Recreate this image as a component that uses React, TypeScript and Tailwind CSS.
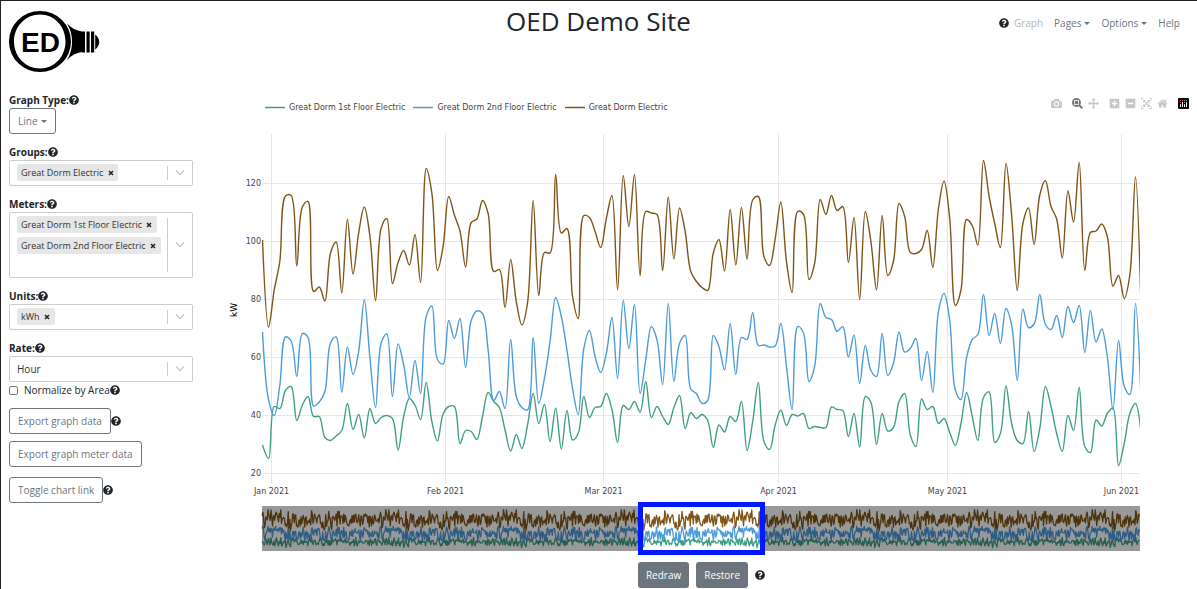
import { ReactNode } from "react";
import { FaQuestionCircle } from "react-icons/fa";
import clsx from "clsx";

// Plot area inside the chart's viewBox
const PLOT = { left: 262, right: 1140, top: 134, bottom: 484 };
const FIRST_DAY_X = 268.6;
const DAY_WIDTH = 5.629;

const yTicks = [
  { label: "120", y: 183 },
  { label: "100", y: 241 },
  { label: "80", y: 299 },
  { label: "60", y: 357 },
  { label: "40", y: 415 },
  { label: "20", y: 473 },
];

const xTicks = [
  { label: "Jan 2021", x: 271.5 },
  { label: "Feb 2021", x: 445.5 },
  { label: "Mar 2021", x: 603.5 },
  { label: "Apr 2021", x: 778.5 },
  { label: "May 2021", x: 947.5 },
  { label: "Jun 2021", x: 1121.5 },
];

interface Trace {
  name: string;
  color: string;
  // one height per day, in plot units
  days: number[];
}

const traces: Trace[] = [
  {
    name: "Great Dorm 1st Floor Electric",
    color: "#3f9f85",
    days: [
      445, 458.5, 406.5, 408.5, 390.5, 386.5, 420.5, 405, 396.5, 416.5, 416.5,
      437.5, 440.5, 436, 430.5, 403.5, 429.5, 414.5, 438, 408.5, 423.5, 417.5,
      415.5, 418.5, 450, 416.5, 398.5, 405, 419.5, 382.5, 421.5, 441, 414,
      406.5, 406.5, 443.5, 430.5, 431.5, 439.5, 416.5, 392.5, 401.5, 407.5,
      430, 451, 434.5, 448.5, 425, 393.5, 423.5, 404.5, 441.5, 408, 449, 410.5,
      440, 433.5, 396.5, 417.5, 407.5, 406.5, 393.5, 409.5, 442.5, 405.5,
      409.5, 401.5, 412, 381.5, 417.5, 406.5, 416.5, 424.5, 407.5, 395.5,
      428.5, 412.5, 418.5, 414.5, 420.5, 447.5, 425, 432, 416.5, 421.5, 401.5,
      450.5, 421.5, 382.5, 441.5, 449.5, 425, 410, 425.5, 414.5, 416, 413.5,
      428.5, 426.5, 427.5, 427.5, 407, 409.5, 410.5, 436.5, 413.5, 447, 396.5,
      402.5, 444.5, 413.5, 431, 427.5, 401.5, 393.5, 435, 446.5, 399, 409.5,
      406.5, 423.5, 418.5, 432.5, 445.5, 423.5, 392.5, 416.5, 440.5, 397.5,
      392, 442.5, 433.5, 386, 423.5, 440.5, 443.5, 411.5, 451.5, 428.5, 386.5,
      406.5, 433.5, 451.5, 415.5, 430.5, 387.5, 446.5, 452.5, 420, 426, 413.5,
      408, 465.5, 443.5, 413.5, 403.5, 433,
    ],
  },
  {
    name: "Great Dorm 2nd Floor Electric",
    color: "#4c9bdb",
    days: [
      332, 400, 415.5, 385, 337, 341, 376.5, 333.5, 337.5, 406, 402, 391.5,
      343, 337, 392, 347, 374.5, 351.5, 300, 358, 407.5, 343, 334, 396.5, 344,
      365, 397.5, 360.5, 393.5, 316.5, 306, 359.5, 364, 320.5, 338.5, 318.5,
      367.5, 320.5, 311, 313.5, 350, 400.5, 391.5, 408.5, 339.5, 396.5, 407.5,
      410, 337.5, 403.5, 378.5, 341.5, 297.5, 316.5, 350, 388.5, 414.5, 348.5,
      330.5, 356.5, 372.5, 353.5, 317.5, 378.5, 300.5, 348.5, 304.5, 393.5,
      360, 326.5, 340, 384.5, 303.5, 381.5, 343.5, 335.5, 389, 393.5, 403.5,
      400.5, 335.5, 346.5, 370, 323.5, 374.5, 337.5, 339.5, 312.5, 345.5, 345,
      347, 346, 323.5, 366.5, 409.5, 326.5, 332.5, 381.5, 366.5, 303.5, 317.5,
      319.5, 331.5, 326.5, 357, 335, 383.5, 345.5, 370.5, 376.5, 333.5, 375.5,
      363.5, 332, 352, 348.5, 338.5, 380.5, 351.5, 392.5, 311.5, 293.5, 320,
      390, 399.5, 357.5, 339.5, 334.5, 294.5, 335.5, 313.5, 343.5, 308.5, 325,
      380.5, 309, 327.5, 324, 294.5, 324.5, 329.5, 315.5, 337.5, 306.5, 322.5,
      305.5, 352.5, 310.5, 342, 329, 356.5, 409.5, 340.5, 386, 394.5, 303.5,
      400,
    ],
  },
  {
    name: "Great Dorm Electric",
    color: "#7f5417",
    days: [
      240, 327, 290, 261, 196, 195.5, 266, 207, 201.5, 291.5, 287, 301, 253,
      242, 293, 219.5, 274, 233, 207, 236, 300.5, 228, 218.5, 283.5, 262.5,
      250.5, 265, 234.5, 282.5, 168.5, 193, 270.5, 246.5, 196.5, 215, 231, 267,
      222.5, 219, 200.5, 213.5, 271.5, 269.5, 307.5, 259.5, 301.5, 325, 303,
      200.5, 295.5, 252.5, 253, 174.5, 233, 228.5, 296.5, 318.5, 215.5, 217.5,
      231.5, 247.5, 218.5, 195.5, 290, 175.5, 226.5, 174.5, 275.5, 211.5, 213,
      214.5, 270.5, 197, 259, 208, 231.5, 271.5, 281.5, 287.5, 290.5, 253,
      239.5, 271, 209.5, 265, 207.5, 259, 200, 196.5, 256.5, 265.5, 238.5, 202,
      261.5, 292.5, 211.5, 214, 279.5, 263.5, 199.5, 214.5, 195.5, 210.5,
      206.5, 262.5, 217.5, 299.5, 211.5, 241.5, 290, 215.5, 275.5, 261.5,
      203.5, 216.5, 252.5, 253.5, 249.5, 230.5, 267.5, 208.5, 181, 218.5,
      305.5, 290, 219.5, 225.5, 245, 160.5, 196.5, 223.5, 247.5, 163.5, 215,
      290.5, 223.5, 208, 244.5, 195, 180.5, 206.5, 219, 258, 191, 222, 162.5,
      270.5, 232.5, 231, 224, 236.5, 286, 275.5, 298.5, 275, 177, 310,
    ],
  },
];

type Point = [number, number];

// Centripetal Catmull-Rom control points around b
function tangents(a: Point, b: Point, c: Point): [Point, Point] {
  const ax = a[0] - b[0];
  const ay = a[1] - b[1];
  const cx = c[0] - b[0];
  const cy = c[1] - b[1];
  const da = Math.pow(ax * ax + ay * ay, 0.25);
  const dc = Math.pow(cx * cx + cy * cy, 0.25);
  const nx = dc * dc * ax - da * da * cx;
  const ny = dc * dc * ay - da * da * cy;
  const d1 = 3 * dc * (da + dc);
  const d2 = 3 * da * (da + dc);
  return [
    [b[0] + nx / d1, b[1] + ny / d1],
    [b[0] - nx / d2, b[1] - ny / d2],
  ];
}

const fmt = (p: Point) => `${p[0].toFixed(2)},${p[1].toFixed(2)}`;

function splinePath(days: number[]) {
  const pts: Point[] = days.map((y, i) => [
    i === 0 ? PLOT.left + 0.5 : FIRST_DAY_X + (i - 1) * DAY_WIDTH,
    y,
  ]);
  const t = pts.slice(1, -1).map((p, i) => tangents(pts[i], p, pts[i + 2]));
  let d = `M${fmt(pts[0])}Q${fmt(t[0][0])} ${fmt(pts[1])}`;
  for (let i = 2; i < pts.length - 1; i++) {
    d += `C${fmt(t[i - 2][1])} ${fmt(t[i - 1][0])} ${fmt(pts[i])}`;
  }
  return d + `Q${fmt(t[t.length - 1][1])} ${fmt(pts[pts.length - 1])}`;
}

// The range slider shows several repeats of the season around the window
const SLIDER = { from: 643, day: 0.75 };

function sliderPath(days: number[]) {
  const n = days.length;
  const first = Math.ceil((PLOT.left - SLIDER.from) / SLIDER.day);
  const last = Math.floor((PLOT.right - SLIDER.from) / SLIDER.day);
  const pts: string[] = [];
  for (let k = first; k <= last; k++) {
    const y = 489.5 + days[((k % n) + n) % n] * 0.125;
    pts.push(fmt([SLIDER.from + k * SLIDER.day, y]));
  }
  return "M" + pts.join("L");
}

function Help() {
  return (
    <button
      type="button"
      aria-label="Help"
      className="shrink-0 text-[#212529]"
    >
      <FaQuestionCircle className="size-[10px]" />
    </button>
  );
}

function Caret() {
  return (
    <svg viewBox="0 0 6 3" className="ml-[3px] h-[3px] w-[6px] fill-current">
      <path d="M0 0h6L3 3z" />
    </svg>
  );
}

function Logo() {
  return (
    <svg viewBox="0 0 91 62" className="h-[62px] w-[91px]">
      <path
        fillRule="evenodd"
        d="M31 0a31 30.5 0 1 0 0 61a31 30.5 0 1 0 0-61zM31 3.5c14.500 0 25.500 12 25.500 27s-11 27-25.500 27S5 45.500 5 30.500s11.500-27 26-27z"
      />
      <path d="M58 12.500c4 4.500 9.500 7.300 15 8v20.500c-5.500.7-11 3.500-15 8c6.800-11 6.800-25.500 0-36.500z" />
      <path d="M73 20.500h3v21h-3zM77.500 20.500h3.200v21h-3.200zM82 20.500h3.200v21h-3.200z" />
      <path d="M86.200 23.500c2.300 1.500 4 4.500 4 7.500s-1.700 6-4 7.500z" />
      <text
        x="12"
        y="40.500"
        fontSize="28"
        fontWeight="700"
        fontFamily="Liberation Sans, sans-serif"
      >
        ED
      </text>
    </svg>
  );
}

function Chevron() {
  return (
    <span className="flex w-6 shrink-0 items-center justify-center self-stretch">
      <svg viewBox="0 0 10 6" className="h-[6px] w-[10px]">
        <path
          d="M1.500 1l3.500 3.500L8.500 1"
          fill="none"
          stroke="#ccc"
          strokeWidth="1.700"
          strokeLinecap="round"
          strokeLinejoin="round"
        />
      </svg>
    </span>
  );
}

function FieldLabel({ id, children }: { id: string; children: ReactNode }) {
  return (
    <div className="flex h-4 items-center">
      <label
        htmlFor={id}
        className="text-[10px] leading-4 font-bold text-[#212529]"
      >
        {children}
      </label>
      <Help />
    </div>
  );
}

interface MultiSelectProps {
  id: string;
  label: string;
  values: string[];
  tall?: boolean;
}

function MultiSelect({ id, label, values, tall }: MultiSelectProps) {
  return (
    <div className="mt-2.5">
      <FieldLabel id={id}>{label}</FieldLabel>
      <div
        className={clsx(
          "flex rounded-xs border border-[#ccc]",
          tall ? "h-[66px]" : "h-[26px]",
        )}
      >
        <div className="flex min-w-0 flex-1 flex-wrap content-start gap-x-1 gap-y-[4px] pt-[3px] pl-[7px]">
          {values.map((value) => (
            <span
              key={value}
              className="flex h-[17px] items-center rounded-xs bg-[#e6e6e6] pl-1 text-[9px] text-[#333]"
            >
              {value}
              <button
                type="button"
                aria-label={`Remove ${value}`}
                className="flex h-full w-[15px] items-center justify-center"
              >
                <svg viewBox="0 0 6 6" className="size-[6px]">
                  <path d="M1 1l4 4M5 1L1 5" stroke="#222" strokeWidth="1.500" />
                </svg>
              </button>
            </span>
          ))}
          <input id={id} className="h-[17px] w-1 outline-none" />
        </div>
        <span className="my-[5px] w-px bg-[#ccc]" />
        <Chevron />
      </div>
    </div>
  );
}

interface OutlineButtonProps {
  id?: string;
  children: ReactNode;
}

function OutlineButton({ id, children }: OutlineButtonProps) {
  return (
    <button
      id={id}
      type="button"
      className="flex h-[26px] items-center rounded-[3px] border border-[#6c757d] px-2 text-[10px] text-[#6c757d]"
    >
      {children}
    </button>
  );
}

function Sidebar() {
  return (
    <aside className="w-[221px] shrink-0 pr-[29px] pl-2">
      <FieldLabel id="graph-type">Graph Type:</FieldLabel>
      <OutlineButton id="graph-type">
        Line
        <Caret />
      </OutlineButton>
      <MultiSelect id="groups" label="Groups:" values={["Great Dorm Electric"]} />
      <MultiSelect
        id="meters"
        label="Meters:"
        values={[
          "Great Dorm 1st Floor Electric",
          "Great Dorm 2nd Floor Electric",
        ]}
        tall
      />
      <MultiSelect id="units" label="Units:" values={["kWh"]} />
      <div className="mt-2.5">
        <FieldLabel id="rate">Rate:</FieldLabel>
        <div className="flex h-[26px] rounded-xs border border-[#ccc]">
          <select
            id="rate"
            className="min-w-0 flex-1 appearance-none bg-transparent pl-[7px] text-[10px] text-[#333]"
          >
            <option>Hour</option>
          </select>
          <span className="my-[5px] w-px bg-[#ccc]" />
          <Chevron />
        </div>
      </div>
      <div className="flex h-4 items-center">
        <input
          id="area"
          type="checkbox"
          className="mr-1.5 size-[9px] appearance-none rounded-[2px] border border-[#767676]"
        />
        <label htmlFor="area" className="text-[10px] leading-4 text-[#212529]">
          Normalize by Area
        </label>
        <Help />
      </div>
      <div className="mt-2.5 flex items-center">
        <OutlineButton>Export graph data</OutlineButton>
        <Help />
      </div>
      <div className="mt-[7px] flex">
        <OutlineButton>Export graph meter data</OutlineButton>
      </div>
      <div className="mt-2.5 flex items-center">
        <OutlineButton>Toggle chart link</OutlineButton>
        <Help />
      </div>
    </aside>
  );
}

interface ModeIcon {
  title: string;
  width: number;
  path: string;
  className: string;
}

const modeIcons: ModeIcon[] = [
  {
    title: "Download plot as a png",
    width: 1000,
    path: "m500 450c-83 0-150-67-150-150 0-83 67-150 150-150 83 0 150 67 150 150 0 83-67 150-150 150z m400 150h-120c-16 0-34 13-39 29l-31 93c-6 15-23 28-40 28h-340c-16 0-34-13-39-28l-31-94c-6-15-23-28-40-28h-120c-55 0-100-45-100-100v-450c0-55 45-100 100-100h800c55 0 100 45 100 100v450c0 55-45 100-100 100z m-400-550c-138 0-250 112-250 250 0 138 112 250 250 250 138 0 250-112 250-250 0-138-112-250-250-250z m365 380c-19 0-35 16-35 35 0 19 16 35 35 35 19 0 35-16 35-35 0-19-16-35-35-35z",
    className: "mr-2.5 fill-[#c6c6c6]",
  },
  {
    title: "Zoom",
    width: 1000,
    path: "m1000-25l-250 251c40 63 63 138 63 218 0 224-182 406-407 406-224 0-406-182-406-406s183-406 407-406c80 0 155 22 218 62l250-250 125 125z m-812 250l0 438 437 0 0-438-437 0z m62 375l313 0 0-312-313 0 0 312z",
    className: "mr-[5px] fill-[#777]",
  },
  {
    title: "Pan",
    width: 1000,
    path: "m1000 350l-187 188 0-125-250 0 0 250 125 0-188 187-187-187 125 0 0-250-250 0 0 125-188-188 186-187 0 125 252 0 0-250-125 0 187-188 188 188-125 0 0 250 250 0 0-126 187 188z",
    className: "mr-2.5 fill-[#c6c6c6]",
  },
  {
    title: "Zoom in",
    width: 875,
    path: "m1 787l0-875 875 0 0 875-875 0z m687-500l-187 0 0-187-125 0 0 187-188 0 0 125 188 0 0 187 125 0 0-187 187 0 0-125z",
    className: "mr-[5px] fill-[#c6c6c6]",
  },
  {
    title: "Zoom out",
    width: 875,
    path: "m0 788l0-876 875 0 0 876-875 0z m688-500l-500 0 0 125 500 0 0-125z",
    className: "mr-[5px] fill-[#c6c6c6]",
  },
  {
    title: "Autoscale",
    width: 1000,
    path: "m250 850l-187 0-63 0 0-62 0-188 63 0 0 188 187 0 0 62z m688 0l-188 0 0-62 188 0 0-188 62 0 0 188 0 62-62 0z m-875-938l0 188-63 0 0-188 0-62 63 0 187 0 0 62-187 0z m875 188l0-188-188 0 0-62 188 0 62 0 0 62 0 188-62 0z m-125 188l-1 0-93-94-156 156 156 156 92-93 2 0 0 250-250 0 0-2 93-92-156-156-156 156 94 92 0 2-250 0 0-250 0 0 93 93 157-156-157-156-93 94 0 0 0-250 250 0 0 0-94 93 156 157 156-157-93-93 0 0 250 0 0 250z",
    className: "mr-[5px] fill-[#c6c6c6]",
  },
  {
    title: "Reset axes",
    width: 928,
    path: "m786 296v-267q0-15-11-26t-25-10h-214v214h-143v-214h-214q-15 0-25 10t-11 26v267q0 1 0 2t0 2l321 264 321-264q1-1 1-4z m124 39l-34-41q-5-5-12-6h-2q-7 0-12 3l-386 322-386-322q-7-4-13-4-7 2-12 7l-35 41q-4 5-3 13t6 12l401 334q18 15 42 15t43-15l136-114v109q0 8 5 13t13 5h107q8 0 13-5t5-13v-227l122-102q5-5 6-12t-4-13z",
    className: "mr-2.5 fill-[#c6c6c6]",
  },
];

function ModeBar() {
  return (
    <div className="flex h-[22px] items-center">
      {modeIcons.map((icon) => (
        <button
          key={icon.title}
          type="button"
          aria-label={icon.title}
          className={icon.className}
        >
          <svg viewBox={`0 0 ${icon.width} 1000`} className="size-[11px]">
            <path transform="matrix(1 0 0 -1 0 850)" d={icon.path} />
          </svg>
        </button>
      ))}
      <a href="#plotly" aria-label="Produced with Plotly">
        <svg viewBox="0 0 132 132" className="size-[11px]">
          <rect width="132" height="132" rx="12" />
          <g fill="#ef5a78">
            <circle cx="30" cy="30" r="7" />
            <circle cx="54" cy="30" r="7" />
            <circle cx="30" cy="54" r="7" />
          </g>
          <g fill="#80cfbe">
            <circle cx="78" cy="30" r="7" />
            <circle cx="102" cy="30" r="7" />
            <circle cx="78" cy="54" r="7" />
          </g>
          <g fill="#fff">
            <rect x="24" y="72" width="12" height="36" rx="6" />
            <rect x="48" y="48" width="12" height="60" rx="6" />
            <rect x="72" y="72" width="12" height="36" rx="6" />
            <rect x="96" y="48" width="12" height="60" rx="6" />
          </g>
        </svg>
      </a>
    </div>
  );
}

function Legend() {
  return (
    <ul className="flex gap-2 pt-2">
      {traces.map((trace) => (
        <li
          key={trace.name}
          className="flex items-center gap-1 font-['DejaVu_Sans',sans-serif] text-[8px] leading-4 text-[#444]"
        >
          <svg viewBox="0 0 20 4" className="h-1 w-5">
            <path d="M0 1.500h20" stroke={trace.color} strokeWidth="1.500" />
          </svg>
          {trace.name}
        </li>
      ))}
    </ul>
  );
}

function Chart() {
  return (
    <svg
      viewBox="222 114 975 442"
      className="block w-full"
      fontFamily="DejaVu Sans, sans-serif"
      fontSize="8"
      fill="#444"
    >
      <defs>
        <clipPath id="plot">
          <rect x="262" y="134" width="878" height="350" />
        </clipPath>
      </defs>
      <g stroke="#e6e6e6">
        {yTicks.map((t) => (
          <path key={t.label} d={`M${PLOT.left} ${t.y + 0.5}H${PLOT.right}`} />
        ))}
        {xTicks.map((t) => (
          <path key={t.label} d={`M${t.x} ${PLOT.top}V${PLOT.bottom}`} />
        ))}
      </g>
      <g clipPath="url(#plot)" fill="none" strokeWidth="1.400">
        {traces.map((trace) => (
          <path
            key={trace.name}
            d={splinePath(trace.days)}
            stroke={trace.color}
          />
        ))}
      </g>
      {yTicks.map((t) => (
        <text key={t.label} x="261" y={t.y + 3} textAnchor="end">
          {t.label}
        </text>
      ))}
      {xTicks.map((t) => (
        <text key={t.label} x={t.x} y="494" textAnchor="middle">
          {t.label}
        </text>
      ))}
      <text
        transform="translate(237 310) rotate(-90)"
        textAnchor="middle"
        fontSize="9"
        fill="#000"
      >
        kW
      </text>

      {/* Range slider */}
      <g fill="none" strokeWidth="1.300" strokeLinejoin="round">
        {traces.map((trace) => (
          <path
            key={trace.name}
            d={sliderPath(trace.days)}
            stroke={trace.color}
          />
        ))}
      </g>
      <g fill="#000" fillOpacity="0.4">
        <rect x="262" y="506" width="377" height="45" />
        <rect x="765" y="506" width="375" height="45" />
      </g>
      <rect
        x="640.500"
        y="504.500"
        width="122"
        height="48"
        fill="none"
        stroke="#0019ff"
        strokeWidth="5"
      />
    </svg>
  );
}

function SolidButton({ children }: { children: ReactNode }) {
  return (
    <button
      type="button"
      className="h-[26px] rounded-[3px] bg-[#6c757d] px-2 text-[10px] text-white"
    >
      {children}
    </button>
  );
}

export default function App() {
  return (
    <div className="min-h-screen border-t border-l border-[#222] bg-white font-['Open_Sans',sans-serif] text-[#212529]">
      <header className="grid h-[91px] grid-cols-[1fr_auto_1fr] items-start pr-[17px] pl-4">
        <div className="-ml-2 pt-2.5">
          <Logo />
        </div>
        <h1 className="pt-1 text-[26px] leading-8">OED Demo Site</h1>
        <nav className="flex items-center justify-end gap-[11px] pt-3.5 text-[10px] leading-4 text-[#6c757d]">
          <span className="flex items-center gap-[5px]">
            <Help />
            <a href="#graph" className="text-[#b5b5b5]">
              Graph
            </a>
          </span>
          <button type="button" className="flex items-center">
            Pages
            <Caret />
          </button>
          <button type="button" className="flex items-center">
            Options
            <Caret />
          </button>
          <a href="#help">Help</a>
        </nav>
      </header>
      <div className="flex">
        <Sidebar />
        <main className="min-w-0 flex-1">
          <div className="flex h-[22px] items-start justify-between pr-2 pl-[43px]">
            <Legend />
            <ModeBar />
          </div>
          <Chart />
          <div className="mt-1.5 flex items-center justify-center gap-[7px] pr-4">
            <SolidButton>Redraw</SolidButton>
            <SolidButton>Restore</SolidButton>
            <Help />
          </div>
        </main>
      </div>
    </div>
  );
}
